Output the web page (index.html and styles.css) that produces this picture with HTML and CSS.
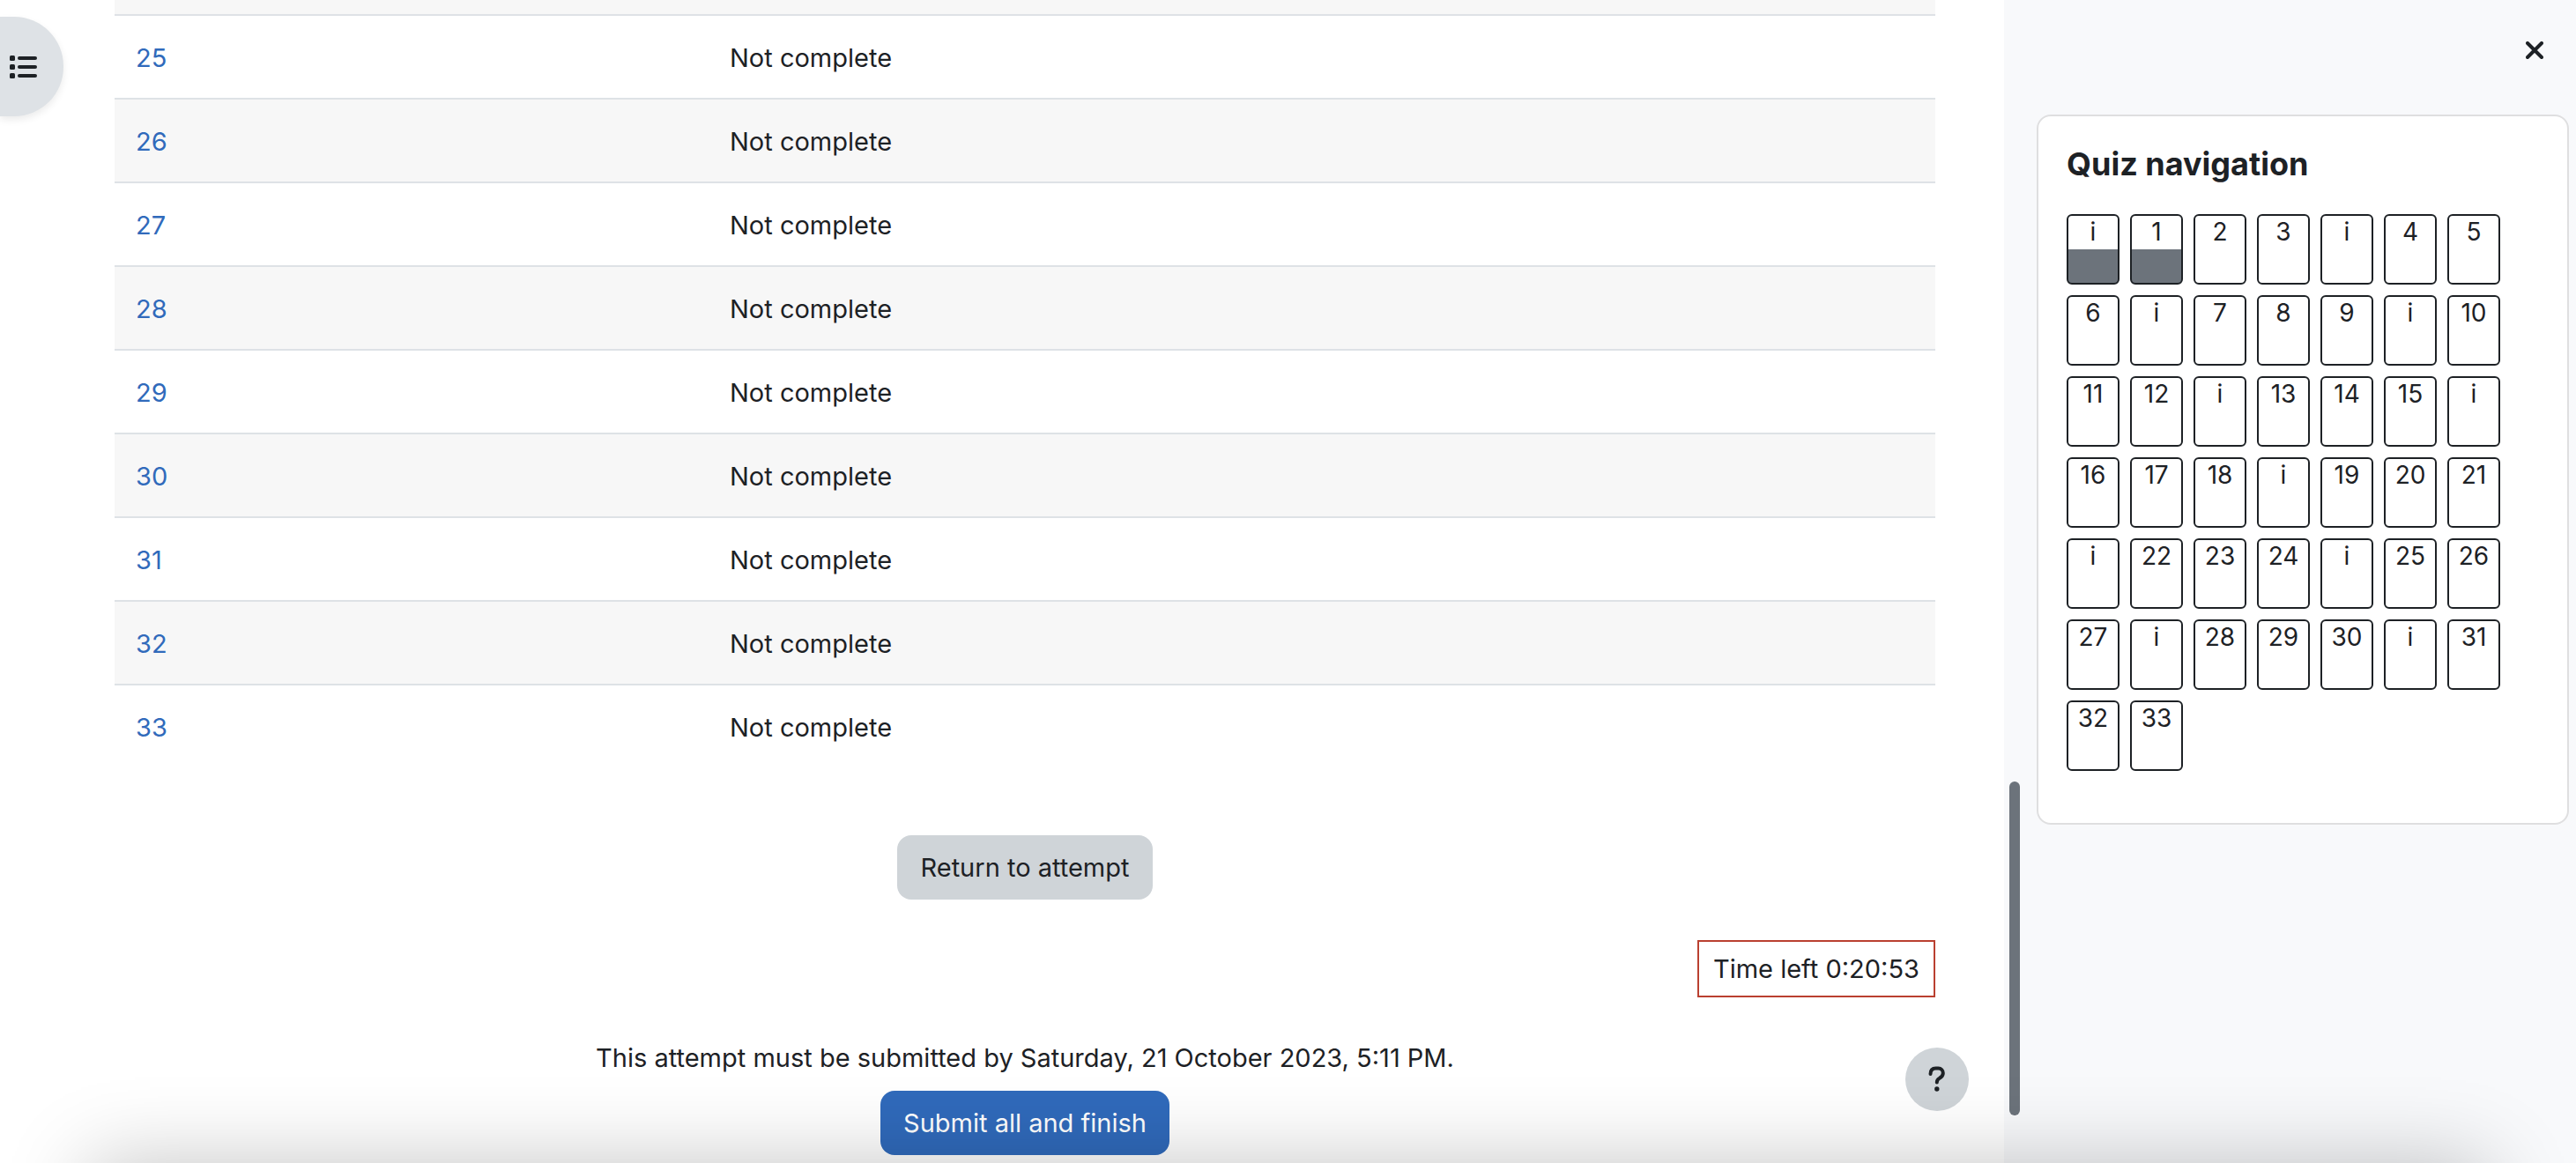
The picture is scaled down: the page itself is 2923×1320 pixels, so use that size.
FILE: index.html
```html
<!DOCTYPE html>
<html lang="en">
<head>
<meta charset="utf-8">
<title>Quiz summary</title>
<link rel="stylesheet" href="styles.css">
</head>
<body>
<div class="page">
  <main class="content">
    <table class="summary">
      <colgroup><col class="col-question"><col></colgroup>
      <tbody>
        <tr class="edge"><td colspan="2"></td></tr>
        <tr><td><a href="#">25</a></td><td>Not complete</td></tr>
        <tr><td><a href="#">26</a></td><td>Not complete</td></tr>
        <tr><td><a href="#">27</a></td><td>Not complete</td></tr>
        <tr><td><a href="#">28</a></td><td>Not complete</td></tr>
        <tr><td><a href="#">29</a></td><td>Not complete</td></tr>
        <tr><td><a href="#">30</a></td><td>Not complete</td></tr>
        <tr><td><a href="#">31</a></td><td>Not complete</td></tr>
        <tr><td><a href="#">32</a></td><td>Not complete</td></tr>
        <tr><td><a href="#">33</a></td><td>Not complete</td></tr>
      </tbody>
    </table>
    <div class="finish">
      <button type="button" class="btn btn-secondary">Return to attempt</button>
      <div class="timer" role="timer">Time left 0:20:53</div>
      <p class="deadline">This attempt must be submitted by Saturday, 21 October 2023, 5:11 PM.</p>
      <button type="button" class="btn btn-primary">Submit all and finish</button>
    </div>
  </main>
  <aside class="drawer">
    <div class="drawer-header">
      <button type="button" class="close" aria-label="Close block drawer">
        <svg width="20" height="20" viewBox="0 0 20 20"><path d="M2 2 18 18M18 2 2 18" fill="none" stroke="currentColor" stroke-width="4" stroke-linecap="round"/></svg>
      </button>
    </div>
    <section class="card">
      <h2 class="card-title">Quiz navigation</h2>
      <nav class="questions">
        <a class="seen" href="#">i</a><a class="seen" href="#">1</a><a href="#">2</a><a href="#">3</a><a href="#">i</a><a href="#">4</a><a href="#">5</a>
        <a href="#">6</a><a href="#">i</a><a href="#">7</a><a href="#">8</a><a href="#">9</a><a href="#">i</a><a href="#">10</a>
        <a href="#">11</a><a href="#">12</a><a href="#">i</a><a href="#">13</a><a href="#">14</a><a href="#">15</a><a href="#">i</a>
        <a href="#">16</a><a href="#">17</a><a href="#">18</a><a href="#">i</a><a href="#">19</a><a href="#">20</a><a href="#">21</a>
        <a href="#">i</a><a href="#">22</a><a href="#">23</a><a href="#">24</a><a href="#">i</a><a href="#">25</a><a href="#">26</a>
        <a href="#">27</a><a href="#">i</a><a href="#">28</a><a href="#">29</a><a href="#">30</a><a href="#">i</a><a href="#">31</a>
        <a href="#">32</a><a href="#">33</a>
      </nav>
    </section>
    <div class="scroll-thumb"></div>
  </aside>
</div>
<button type="button" class="index-toggle" aria-label="Open course index">
  <svg width="32" height="28" viewBox="0 0 32 28" fill="currentColor"><rect x="0" y="1" width="6" height="6" rx="1.5"/><rect x="0" y="11" width="6" height="6" rx="1.5"/><rect x="0" y="21" width="6" height="6" rx="1.5"/><rect x="9" y="2" width="22" height="4" rx="2"/><rect x="9" y="12" width="22" height="4" rx="2"/><rect x="9" y="22" width="22" height="4" rx="2"/></svg>
</button>
<button type="button" class="help" aria-label="Help">
  <svg width="20" height="30" viewBox="0 0 20 30"><path d="M2.5 9C2.500 4.500 5 2.500 8.500 2.500H11.500C14.500 2.500 16.800 5 16.800 8C16.800 11 15 12.500 12.800 13.800C10.500 15 9.800 16 9.800 18.500" fill="none" stroke="currentColor" stroke-width="4" stroke-linecap="round"/><circle cx="9.800" cy="26" r="2.700" fill="currentColor"/></svg>
</button>
<div class="bottom-shade"></div>
</body>
</html>
```

FILE: styles.css
```css
* {
  box-sizing: border-box;
}

body {
  margin: 0;
  overflow: hidden;
  background: #fff;
  color: #1d2125;
  font-family: Inter, "Liberation Sans", sans-serif;
  font-size: 29px;
  line-height: 45px;
}

a {
  color: #306abb;
  text-decoration: none;
}

button {
  border: 0;
  padding: 0;
  color: inherit;
  font: inherit;
}

.page {
  display: grid;
  grid-template-columns: 1fr 649px;
  min-height: 100vh;
}

.content {
  padding: 0 78px 0 130px;
}

.summary {
  width: 100%;
  border-collapse: separate;
  border-spacing: 0;
  table-layout: fixed;
}

.col-question {
  width: 674px;
}

.summary td {
  padding: 25px 24px 23px;
  border-top: 2px solid #dee2e6;
}

.summary tr:nth-child(odd) {
  background: #f7f7f7;
}

.summary .edge td {
  height: 16px;
  padding: 0;
  border: 0;
}

.finish {
  display: flex;
  flex-direction: column;
  align-items: center;
  padding-top: 77px;
}

.btn {
  height: 73px;
  padding: 0 26px;
  border-radius: 16px;
}

.btn-secondary {
  background: #cfd4d8;
}

.btn-primary {
  background: #306abb;
  color: #fff;
}

.timer {
  align-self: flex-end;
  margin: 46px 0;
  padding: 8px 16px;
  border: 2px solid #ba4030;
}

.deadline {
  margin: 0 0 15px;
}

.drawer {
  position: relative;
  padding: 0 8px 0 37px;
  background: #f8f9fb;
}

.drawer-header {
  display: flex;
  justify-content: flex-end;
  align-items: center;
  height: 130px;
  padding: 0 19px 16px 0;
}

.close {
  display: flex;
  align-items: center;
  justify-content: center;
  width: 40px;
  height: 40px;
  background: none;
}

.card {
  padding: 32px 32px 59px;
  border: 2px solid #dfdfe0;
  border-radius: 16px;
  background: #fff;
}

.card-title {
  margin: 0 0 34px;
  font-size: 36px;
  font-weight: 700;
  line-height: 45px;
}

.questions {
  display: flex;
  flex-wrap: wrap;
  gap: 12px;
}

.questions a {
  width: 60px;
  height: 80px;
  border: 2px solid #1d2125;
  border-radius: 6px;
  background: #fff;
  color: inherit;
  font-size: 28px;
  line-height: 36px;
  text-align: center;
}

.questions .seen {
  background: linear-gradient(#fff 50%, #6c737b 50%);
}

.scroll-thumb {
  position: absolute;
  left: 6px;
  bottom: 54px;
  width: 12px;
  height: 379px;
  border-radius: 6px;
  background: #6c737b;
}

.index-toggle {
  position: fixed;
  top: 19px;
  left: 0;
  display: flex;
  align-items: center;
  width: 72px;
  height: 113px;
  padding-left: 11px;
  border-radius: 0 56px 56px 0;
  background: #dee2e6;
  box-shadow: 0 4px 8px rgba(0, 0, 0, 0.08);
}

.help {
  position: fixed;
  right: 689px;
  bottom: 59px;
  display: flex;
  align-items: center;
  justify-content: center;
  width: 72px;
  height: 72px;
  border-radius: 50%;
  background: #cfd4d8;
}

.bottom-shade {
  position: fixed;
  top: 100%;
  right: 100px;
  left: 100px;
  height: 400px;
  box-shadow: 0 0 90px rgba(0, 0, 0, 0.23);
  pointer-events: none;
}
```
